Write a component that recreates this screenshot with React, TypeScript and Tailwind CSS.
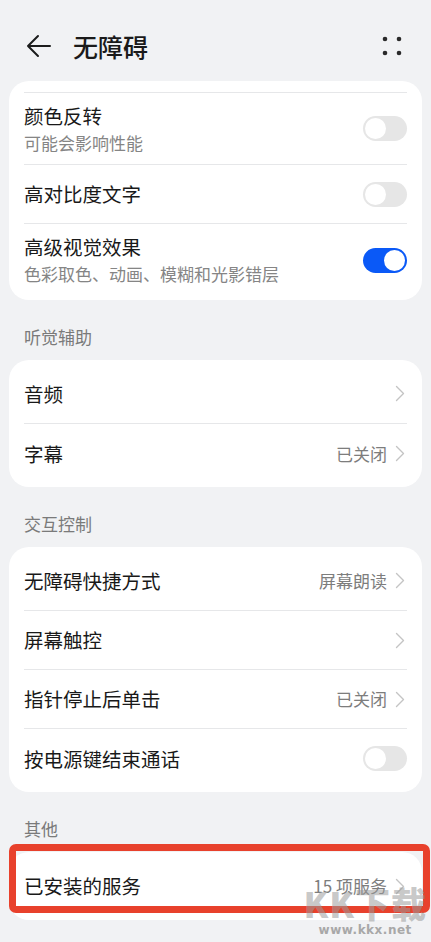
import type { ReactNode } from 'react';

const font = { fontFamily: '"Noto Sans CJK SC", "Noto Sans", sans-serif' };

function Chevron() {
  return (
    <svg width="10" height="17" viewBox="0 0 10 17" className="shrink-0">
      <path d="M1.5 1.5 L8.5 8.5 L1.5 15.5" fill="none" stroke="#c4c4c4" strokeWidth="1.4" strokeLinecap="round" strokeLinejoin="round" />
    </svg>
  );
}

function Toggle({ on }: { on?: boolean }) {
  return (
    <div
      className={`flex h-[25px] w-[44px] shrink-0 items-center rounded-full px-[2px] ${
        on ? 'justify-end bg-[#0a59f7]' : 'justify-start bg-[#e6e6e6]'
      }`}
    >
      <div className="h-[21px] w-[21px] rounded-full bg-white" />
    </div>
  );
}

function Divider() {
  return <div className="mx-[15px] h-px bg-[#e6e7e9]" />;
}

type RowProps = {
  title: string;
  sub?: string;
  value?: string;
  right?: ReactNode;
  h: string;
};

function Row({ title, sub, value, right, h }: RowProps) {
  return (
    <div className={`flex items-center justify-between px-[15px] ${h}`}>
      <div className="flex flex-col">
        <span className="text-[19.5px] leading-[26px] text-[#191919]">{title}</span>
        {sub && <span className="mt-[2px] text-[17px] leading-[24px] text-[#858585]">{sub}</span>}
      </div>
      {right ?? (
        <div className="flex items-center gap-[8px] pr-[2px]">
          {value && <span className="text-[17px] leading-[24px] text-[#7d7d7d]">{value}</span>}
          <Chevron />
        </div>
      )}
    </div>
  );
}

function Section({ label }: { label: string }) {
  return (
    <div className="h-[60px] px-[24px] pt-[25px] text-[17px] leading-[24px] text-[#7a7a7a]">{label}</div>
  );
}

export default function App() {
  return (
    <div className="relative min-h-[942px] w-[431px] overflow-hidden bg-[#f1f2f4]" style={font}>
      <header className="flex h-[81px] items-center pt-[11px] pl-[26px] pr-[29px]">
        <svg width="26" height="24" viewBox="0 0 26 24">
          <path d="M24 12 H2 M12 2 L2 12 L12 22" fill="none" stroke="#1c1c1c" strokeWidth="2" strokeLinecap="round" strokeLinejoin="round" />
        </svg>
        <h1 className="ml-[21px] text-[25px] font-medium leading-[32px] text-[#1a1a1a]">无障碍</h1>
        <svg width="20" height="20" viewBox="0 0 20 20" className="ml-auto">
          <circle cx="3" cy="3" r="2.3" fill="#2a2a2a" />
          <circle cx="17" cy="3" r="2.3" fill="#2a2a2a" />
          <circle cx="3" cy="17" r="2.3" fill="#2a2a2a" />
          <circle cx="17" cy="17" r="2.3" fill="#2a2a2a" />
        </svg>
      </header>

      <div className="mx-[9px] rounded-[20px] bg-white pt-[11px] pb-[4px]">
        <Divider />
        <Row h="h-[71px]" title="颜色反转" sub="可能会影响性能" right={<Toggle />} />
        <Divider />
        <Row h="h-[58px]" title="高对比度文字" right={<Toggle />} />
        <Divider />
        <Row h="h-[72px]" title="高级视觉效果" sub="色彩取色、动画、模糊和光影错层" right={<Toggle on />} />
      </div>

      <Section label="听觉辅助" />
      <div className="mx-[9px] rounded-[20px] bg-white py-[4px]">
        <Row h="h-[59px]" title="音频" />
        <Divider />
        <Row h="h-[59px]" title="字幕" value="已关闭" />
      </div>

      <Section label="交互控制" />
      <div className="mx-[9px] rounded-[20px] bg-white py-[4px]">
        <Row h="h-[59px]" title="无障碍快捷方式" value="屏幕朗读" />
        <Divider />
        <Row h="h-[58px]" title="屏幕触控" />
        <Divider />
        <Row h="h-[58px]" title="指针停止后单击" value="已关闭" />
        <Divider />
        <Row h="h-[59px]" title="按电源键结束通话" right={<Toggle />} />
      </div>

      <Section label="其他" />
      <div className="relative mx-[9px]">
        <div className="rounded-[20px] bg-white py-[4px]">
          <Row h="h-[60px]" title="已安装的服务" value="15 项服务" />
        </div>
        <div className="absolute -top-[8px] bottom-[7px] left-0 -right-[8px] rounded-[7px] border-[7px] border-[#e8412c]" />
      </div>

      <div className="pointer-events-none absolute right-[4px] bottom-[6px] flex flex-col items-center">
        <span className="text-[35px] font-black leading-[36px] tracking-[1px] text-[#9a9a9a]/55">KK下载</span>
        <span className="mt-[3px] text-[12px] font-bold leading-[12px] tracking-[0.5px] text-[#a8a8a8]" style={{ fontFamily: '"DejaVu Sans", sans-serif' }}>
          www.kkx.net
        </span>
      </div>
    </div>
  );
}
